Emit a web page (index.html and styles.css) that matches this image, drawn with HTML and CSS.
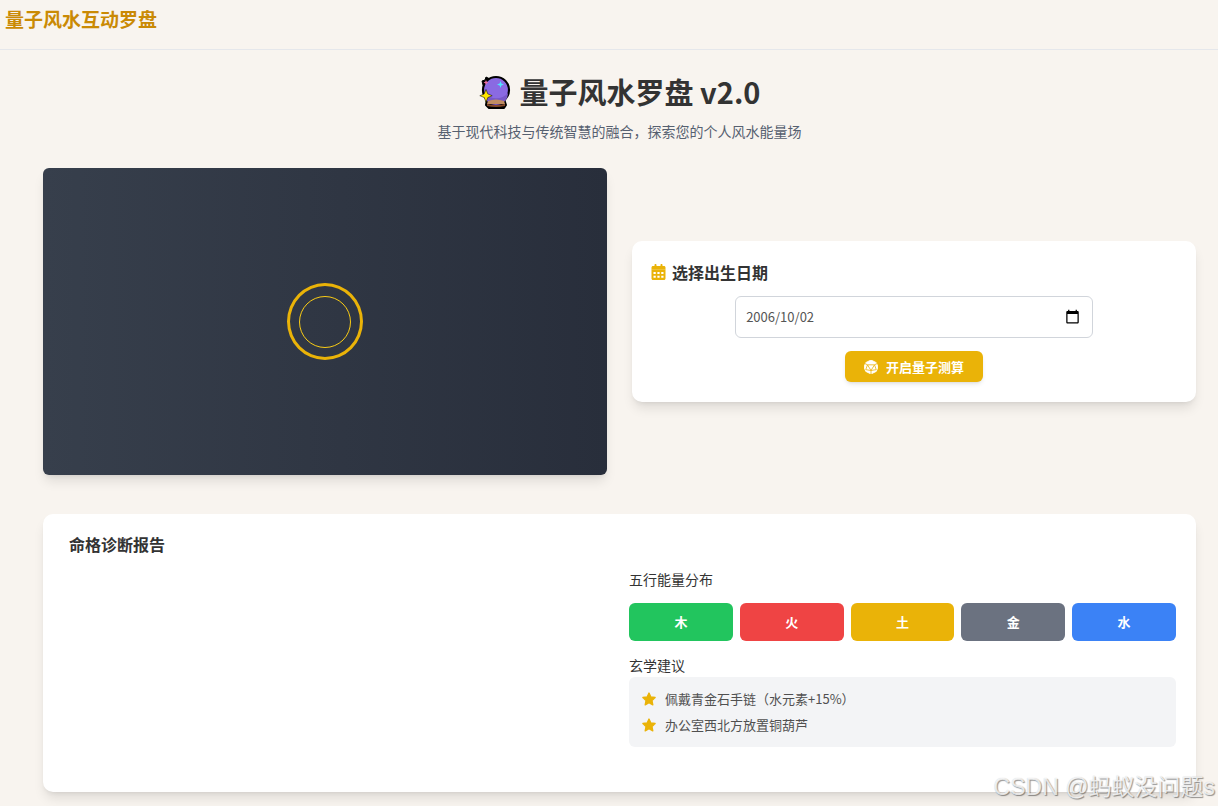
FILE: index.html
```html
<!DOCTYPE html>
<html lang="zh-CN">
<head>
    <meta charset="UTF-8">
    <meta name="viewport" content="width=device-width, initial-scale=1.0">
    <title>量子风水互动罗盘</title>
    <link rel="stylesheet" href="styles.css">
</head>
<body>
    <header class="navbar">
        <div class="brand">量子风水互动罗盘</div>
    </header>

    <main class="container">
        <div class="hero">
            <h1>
                <svg class="crystal" viewBox="0 0 32 34" aria-hidden="true">
                    <path d="M8 24h17l2 6-2 3H10l-3-3z" fill="#000" stroke="#000" stroke-width="2" stroke-linejoin="round"/>
                    <path d="M4 10L3 6l3-1 1-3 4 2z" fill="#000" stroke="#000" stroke-linejoin="round"/>
                    <circle cx="17" cy="15" r="13" fill="#8a6ae2" stroke="#000" stroke-width="2.200"/>
                    <path d="M5 18a12 12 0 0 0 24 0c-6 7-17 7-24 0z" fill="#7858c8"/>
                    <path d="M9 26q8-3 16 0l1 3H8z" fill="#c08c62"/>
                    <path d="M8 29q9 2 18 0v2q-9 2-18 0z" fill="#84482a"/>
                    <path d="M7 5l.8 1.700 1.700.8-1.700.8L7 10l-.8-1.700-1.700-.8 1.700-.8z" fill="#ef6fa0"/>
                    <path d="M21.500 6l.9 2.600L25 9.500l-2.600.9-.9 2.600-.9-2.600-2.600-.9 2.600-.9z" fill="#4fe3ff"/>
                    <path d="M7 14.500l1.800 4.400 4.400 1.800-4.400 1.800L7 27l-1.800-4.500L.8 20.700l4.400-1.800z" fill="#ffe600" stroke="#000" stroke-width=".5"/>
                </svg>
                <span>量子风水罗盘 v2.0</span>
            </h1>
            <p>基于现代科技与传统智慧的融合，探索您的个人风水能量场</p>
        </div>

        <div class="top-grid">
            <div class="compass">
                <div class="ring-outer">
                    <div class="ring-inner"></div>
                </div>
            </div>

            <form class="card date-card">
                <label class="card-title" for="birthDate">
                    <svg class="icon-calendar" viewBox="0 0 448 512" aria-hidden="true">
                        <path fill-rule="evenodd" fill="currentColor" d="M128 0c18 0 32 14 32 32v32h128V32c0-18 14-32 32-32s32 14 32 32v32h48c27 0 48 21 48 48v352c0 27-21 48-48 48H48c-27 0-48-21-48-48V112c0-27 21-48 48-48h48V32c0-18 14-32 32-32zM64 256v60h72v-60zM188 256v60h72v-60zM312 256v60h72v-60zM64 376v60h72v-60zM188 376v60h72v-60zM312 376v60h72v-60z"/>
                        <path fill="#fff" opacity=".3" d="M0 170h448v20H0z"/>
                    </svg>
                    选择出生日期
                </label>
                <div class="date-field">
                    <input type="text" id="birthDate" name="birthDate" value="2006/10/02">
                    <svg class="icon-picker" viewBox="0 0 24 24" aria-hidden="true">
                        <path d="M20 3h-1V1h-2v2H7V1H5v2H4c-1.100 0-2 .9-2 2v16c0 1.100.9 2 2 2h16c1.100 0 2-.9 2-2V5c0-1.100-.9-2-2-2zm0 18H4V8h16z"/>
                    </svg>
                </div>
                <button type="button" class="btn-start">
                    <svg class="icon-dice" viewBox="0 0 16 16" aria-hidden="true">
                        <path d="M8 0l6 3 2 5-2 5-6 3-6-3-2-5 2-5z" fill="#fff" stroke="#fff" stroke-linejoin="round"/>
                        <path d="M4 5.500h8L8 12zM4 5.500L1 4M12 5.500l3-1.500M8 12v4M4 5.500L2 11l6 1M12 5.500l2 5.500-6 1" fill="none" stroke="#eab308" stroke-width=".9"/>
                    </svg>
                    开启量子测算
                </button>
            </form>
        </div>

        <section class="card report">
            <h2>命格诊断报告</h2>
            <div class="report-grid">
                <div class="chart"></div>
                <div>
                    <h3>五行能量分布</h3>
                    <div class="elements">
                        <div class="element wood">木</div>
                        <div class="element fire">火</div>
                        <div class="element earth">土</div>
                        <div class="element metal">金</div>
                        <div class="element water">水</div>
                    </div>
                    <h3>玄学建议</h3>
                    <ul class="advice">
                        <li>
                            <svg class="icon-star" viewBox="0 0 24 24" aria-hidden="true"><path d="M12 3l2.800 6 6.400.8-4.700 4.500 1.200 6.400L12 17.500l-5.700 3.200 1.200-6.400L2.800 9.800 9.200 9z"/></svg>
                            佩戴青金石手链（水元素+15%）
                        </li>
                        <li>
                            <svg class="icon-star" viewBox="0 0 24 24" aria-hidden="true"><path d="M12 3l2.800 6 6.400.8-4.700 4.500 1.200 6.400L12 17.500l-5.700 3.200 1.200-6.400L2.800 9.800 9.200 9z"/></svg>
                            办公室西北方放置铜葫芦
                        </li>
                    </ul>
                </div>
            </div>
        </section>
    </main>

    <div class="watermark">CSDN @蚂蚁没问题s</div>
</body>
</html>
```
FILE: styles.css
```css
* {
    box-sizing: border-box;
    margin: 0;
    padding: 0;
}
body {
    position: relative;
    min-height: 100vh;
    font-family: "Noto Sans CJK SC", sans-serif;
    font-size: 13px;
    color: #333;
    background-color: #f8f4ef;
}
.navbar {
    padding: 5px 5px 16px;
    border-bottom: 1px solid #e5e7eb;
}
.brand {
    font-size: 19px;
    line-height: 28px;
    font-weight: bold;
    color: #ca8a04;
}
.container {
    padding: 23px 22px 14px 43px;
}
.hero {
    margin-bottom: 27px;
    text-align: center;
}
h1 {
    display: flex;
    align-items: flex-end;
    justify-content: center;
    gap: 9px;
    margin-bottom: 12px;
    font-size: 29px;
    line-height: 36px;
}
.crystal {
    width: 32px;
    height: 34px;
}
.hero p {
    font-size: 14px;
    line-height: 20px;
    color: #566070;
}
.top-grid {
    display: grid;
    grid-template-columns: 1fr 1fr;
    align-items: center;
    gap: 25px;
    margin-bottom: 39px;
}
.compass {
    display: flex;
    align-items: center;
    justify-content: center;
    height: 307px;
    border-radius: 6px;
    background: linear-gradient(to right, #373f4c, #282e3b);
    box-shadow: 0 8px 12px -2px rgba(0, 0, 0, 0.1), 0 3px 5px -3px rgba(0, 0, 0, 0.1);
}
.ring-outer {
    display: flex;
    align-items: center;
    justify-content: center;
    width: 76px;
    height: 77px;
    border: 3px solid #eab308;
    border-radius: 50%;
}
.ring-inner {
    width: 52px;
    height: 52px;
    border: 1px solid #facc15;
    border-radius: 50%;
}
.card {
    border-radius: 10px;
    background-color: #fff;
    box-shadow: 0 8px 12px -2px rgba(0, 0, 0, 0.1), 0 3px 5px -3px rgba(0, 0, 0, 0.1);
}
.date-card {
    display: flex;
    flex-direction: column;
    align-items: center;
    padding: 20px 19px;
}
.card-title {
    display: flex;
    align-items: center;
    align-self: stretch;
    gap: 6px;
    margin-bottom: 13px;
    font-size: 16px;
    line-height: 22px;
    font-weight: bold;
}
.icon-calendar {
    width: 15px;
    height: 16px;
    color: #eab308;
}
.date-field {
    position: relative;
    width: 68%;
    margin-bottom: 13px;
}
.date-field input {
    display: block;
    width: 100%;
    height: 42px;
    padding: 0 10px 2px;
    border: 1px solid #d1d5db;
    border-radius: 6px;
    font: inherit;
    color: #555;
    background-color: #fff;
}
.icon-picker {
    position: absolute;
    top: 13px;
    right: 13px;
    width: 15px;
    height: 15px;
}
.btn-start {
    display: flex;
    align-items: center;
    gap: 8px;
    height: 31px;
    padding: 0 19px;
    border: none;
    border-radius: 6px;
    font: inherit;
    font-weight: bold;
    color: #fff;
    background-color: #eab308;
    box-shadow: 0 3px 5px -1px rgba(0, 0, 0, 0.1), 0 2px 3px -2px rgba(0, 0, 0, 0.1);
}
.icon-dice {
    width: 14px;
    height: 14px;
}
.report {
    padding: 20px;
}
.report h2 {
    margin-bottom: 15px;
    padding-left: 6px;
    font-size: 16px;
    line-height: 20px;
}
.report-grid {
    display: grid;
    grid-template-columns: 1fr 1fr;
    gap: 19px;
}
.chart {
    height: 203px;
}
h3 {
    margin-bottom: 2px;
    font-size: 14px;
    line-height: 20px;
    font-weight: normal;
}
.elements {
    display: grid;
    grid-template-columns: repeat(5, 1fr);
    gap: 7px;
    margin: 14px 0;
}
.element {
    border-radius: 6px;
    line-height: 38px;
    font-weight: bold;
    text-align: center;
    color: #fff;
}
.wood {
    background-color: #22c55e;
}
.fire {
    background-color: #ef4444;
}
.earth {
    background-color: #eab308;
}
.metal {
    background-color: #6b7280;
}
.water {
    background-color: #3b82f6;
}
.advice {
    padding: 9px 12px;
    border-radius: 6px;
    list-style: none;
    color: #505050;
    background-color: #f3f4f6;
}
.advice li {
    display: flex;
    align-items: center;
    gap: 8px;
    line-height: 26px;
}
.icon-star {
    width: 16px;
    height: 16px;
    fill: #eab308;
    stroke: #eab308;
    stroke-width: 2;
    stroke-linejoin: round;
}
.watermark {
    position: absolute;
    right: 3px;
    bottom: 3px;
    font-family: "Liberation Sans", "Noto Sans CJK SC", sans-serif;
    font-size: 23px;
    line-height: 32px;
    color: rgba(255, 255, 255, 0.8);
    text-shadow: 1px 1px 1px rgba(0, 0, 0, 0.4), 0 0 1px rgba(0, 0, 0, 0.2);
}
```
